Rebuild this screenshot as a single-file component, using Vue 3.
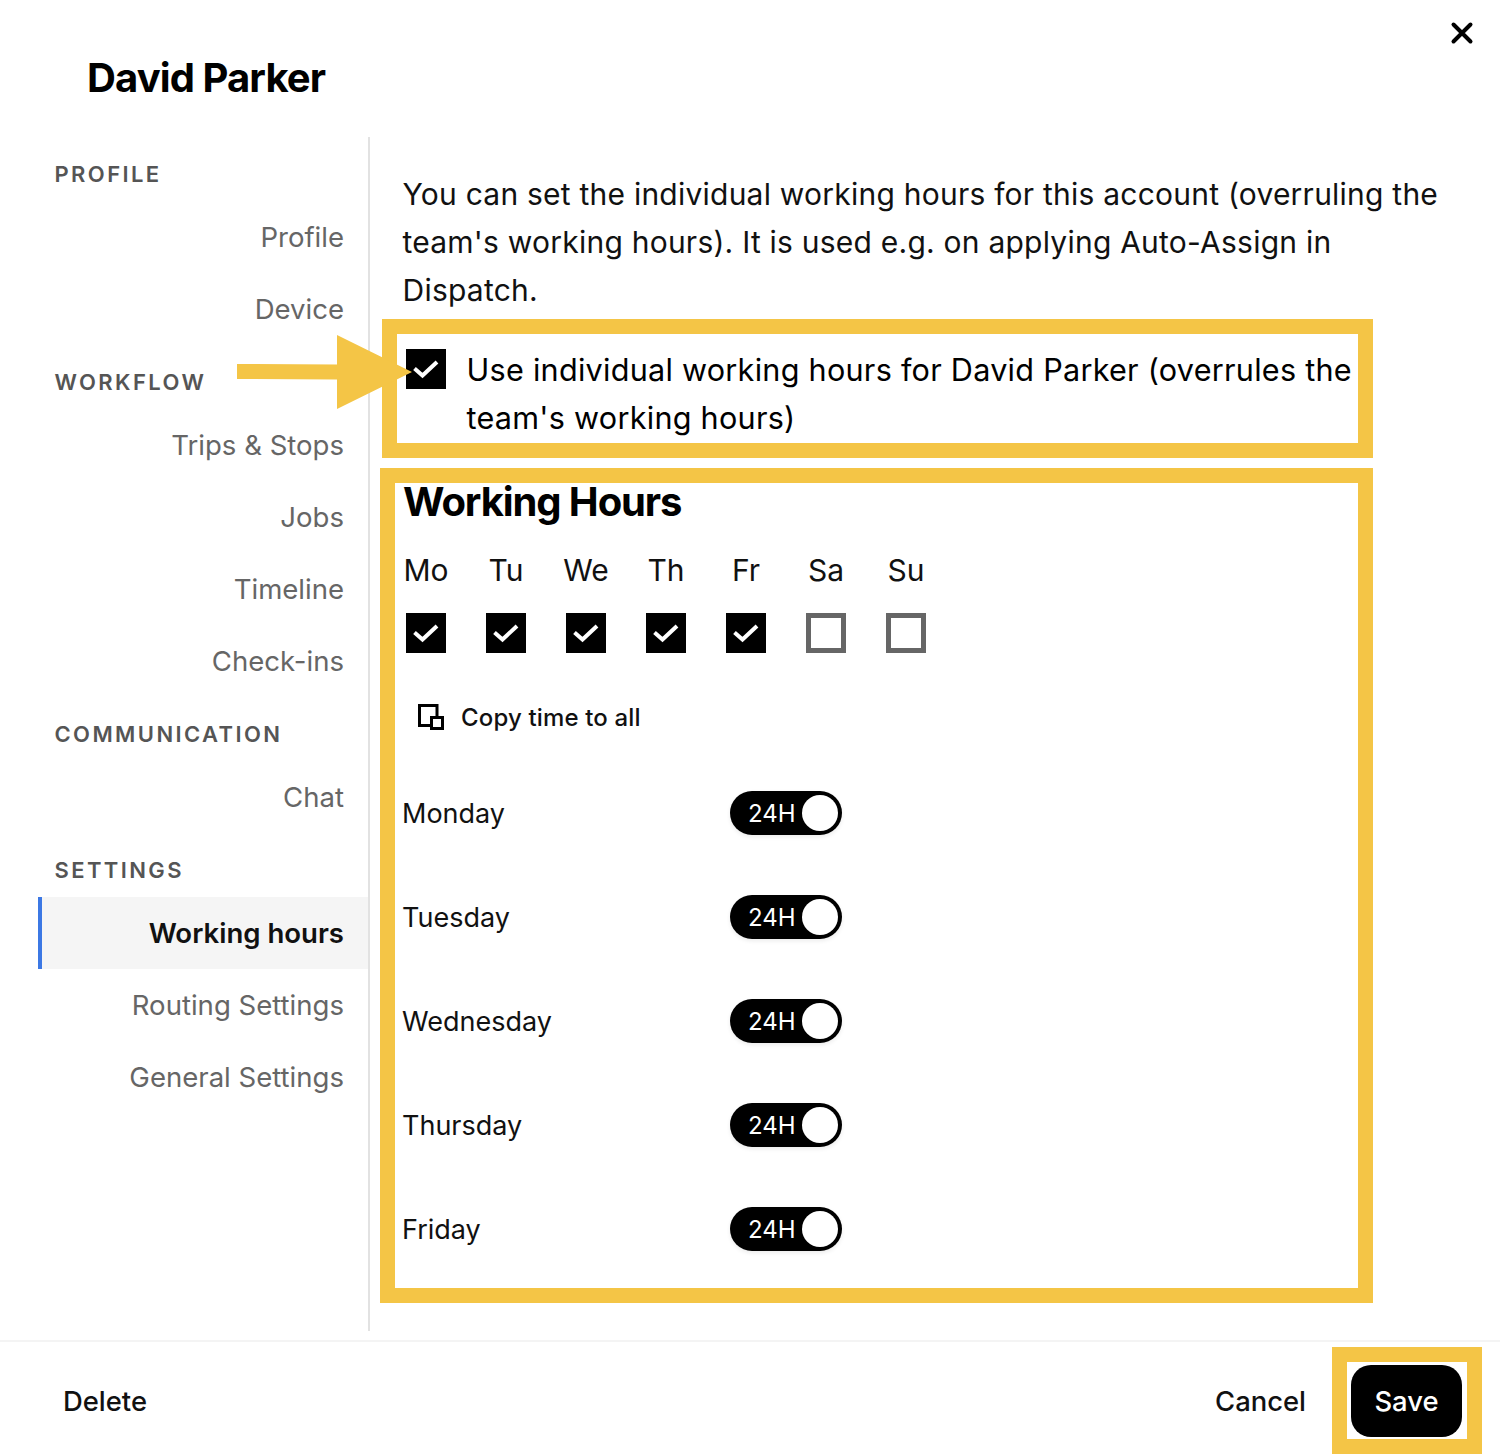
<script setup>
const nav = [
  { title: "PROFILE", items: ["Profile", "Device"] },
  { title: "WORKFLOW", items: ["Trips & Stops", "Jobs", "Timeline", "Check-ins"] },
  { title: "COMMUNICATION", items: ["Chat"] },
  { title: "SETTINGS", items: ["Working hours", "Routing Settings", "General Settings"] },
];
const days = [
  { label: "Mo", on: true },
  { label: "Tu", on: true },
  { label: "We", on: true },
  { label: "Th", on: true },
  { label: "Fr", on: true },
  { label: "Sa", on: false },
  { label: "Su", on: false },
];
const rows = ["Monday", "Tuesday", "Wednesday", "Thursday", "Friday"];
</script>

<template>
  <div class="page">
    <header class="head">
      <h1>David Parker</h1>
      <svg class="close" width="24" height="24" viewBox="0 0 24 24">
        <path d="M3.5 3.5 20.500 20.500M20.500 3.500 3.500 20.500" stroke="#000" stroke-width="4" stroke-linecap="round" fill="none" />
      </svg>
    </header>

    <div class="body">
      <nav class="side">
        <section v-for="group in nav" :key="group.title">
          <div class="group-title">{{ group.title }}</div>
          <div
            v-for="item in group.items"
            :key="item"
            class="nav-item"
            :class="{ active: item === 'Working hours' }"
          >
            {{ item }}
          </div>
        </section>
      </nav>

      <main class="main">
        <p class="intro">
          You can set the individual working hours for this account (overruling the team's working hours). It is used e.g. on applying Auto-Assign in Dispatch.
        </p>

        <div class="use-row">
          <span class="check on">
            <svg width="26" height="26" viewBox="0 0 26 26"><path d="M1.500 12.500 9.500 19.500 24 6" stroke="#fff" stroke-width="4" fill="none" /></svg>
          </span>
          <div class="use-text">Use individual working hours for David Parker (overrules the team's working hours)</div>
        </div>

        <h2>Working Hours</h2>

        <div class="days">
          <div v-for="d in days" :key="d.label" class="day">
            <span class="day-label">{{ d.label }}</span>
            <span class="check" :class="{ on: d.on }">
              <svg v-if="d.on" width="26" height="26" viewBox="0 0 26 26"><path d="M1.500 12.500 9.500 19.500 24 6" stroke="#fff" stroke-width="4" fill="none" /></svg>
            </span>
          </div>
        </div>

        <div class="copy">
          <svg width="26" height="26" viewBox="0 0 26 26" fill="none" stroke="#000" stroke-width="3">
            <path d="M13 21.500H1.500V1.500H19V13" />
            <rect x="13.500" y="13.500" width="11" height="11" fill="#fff" />
          </svg>
          <span>Copy time to all</span>
        </div>

        <div v-for="r in rows" :key="r" class="hours-row">
          <span class="hours-day">{{ r }}</span>
          <span class="toggle">
            <span class="toggle-text">24H</span>
            <span class="knob"></span>
          </span>
        </div>
      </main>
    </div>

    <footer class="foot">
      <span class="delete">Delete</span>
      <span class="cancel">Cancel</span>
      <button class="save">Save</button>
    </footer>

    <div class="mark mark-use"></div>
    <div class="mark mark-hours"></div>
    <div class="mark mark-save"></div>
    <svg class="arrow" width="176" height="76" viewBox="0 0 176 76">
      <path d="M0 29 100 29.500 100 0 175 37 100 74 100 44.500 0 44Z" fill="#f4c546" />
    </svg>
  </div>
</template>

<style>
body {
  background: #fff;
}
</style>

<style scoped>
.page {
  position: relative;
  width: 1500px;
  height: 1454px;
  overflow: hidden;
  display: flex;
  flex-direction: column;
  font-family: Inter, "Liberation Sans", sans-serif;
  color: #111;
  background: #fff;
}
.head {
  height: 137px;
  flex: none;
  display: flex;
  justify-content: space-between;
  align-items: flex-start;
  padding: 0 26px 0 87px;
  box-sizing: border-box;
}
.head h1 {
  margin: 54px 0 0;
  font-size: 40px;
  line-height: 48px;
  font-weight: 700;
  letter-spacing: -0.9px;
  color: #000;
}
.close {
  margin-top: 21px;
}
.body {
  height: 1194px;
  flex: none;
  display: flex;
  align-items: stretch;
}
.side {
  width: 332px;
  margin-left: 38px;
  box-sizing: border-box;
  border-right: 2px solid #e2e2e2;
  flex: none;
}
.group-title {
  height: 56px;
  margin-top: 8px;
  line-height: 58px;
  padding-left: 16.5px;
  font-size: 22px;
  font-weight: 600;
  letter-spacing: 2.4px;
  color: #555;
}
.nav-item {
  height: 72px;
  line-height: 72px;
  padding-right: 24px;
  text-align: right;
  font-size: 27.55px;
  color: #666;
}
.nav-item.active {
  background: #f5f5f5;
  box-shadow: inset 4px 0 0 #3c78e4;
  color: #111;
  font-weight: 600;
}
.main {
  flex: 1;
  padding-left: 32px;
  min-width: 0;
}
.intro {
  margin: 33px 0 0 0.5px;
  width: 1045px;
  font-size: 30px;
  line-height: 48px;
  letter-spacing: 0.23px;
}
.use-row {
  display: flex;
  margin-top: 32px;
  padding-left: 4px;
  width: 960px;
}
.check {
  width: 40px;
  height: 40px;
  box-sizing: border-box;
  border: 5px solid #666;
  display: flex;
  align-items: center;
  justify-content: center;
  flex: none;
}
.check.on {
  background: #000;
  border: 0;
}
.use-row .check {
  margin-top: 3px;
}
.use-text {
  margin-left: 20.5px;
  font-size: 30.6px;
  line-height: 48px;
  letter-spacing: 0.26px;
  color: #000;
}
h2 {
  margin: 36px 0 0 1px;
  font-size: 40px;
  line-height: 48px;
  font-weight: 700;
  letter-spacing: -1.1px;
  color: #000;
}
.days {
  display: flex;
  gap: 40px;
  margin: 24px 0 0 4px;
}
.day {
  width: 40px;
  display: flex;
  flex-direction: column;
  align-items: center;
  gap: 23px;
  flex: none;
}
.day-label {
  font-size: 30px;
  line-height: 40px;
  width: 40px;
  white-space: nowrap;
  display: flex;
  justify-content: center;
}
.copy {
  display: flex;
  align-items: center;
  gap: 17px;
  margin: 49px 0 0 16px;
  height: 30px;
  font-size: 24px;
  font-weight: 500;
  letter-spacing: 0.15px;
}
.hours-row {
  height: 104px;
  display: flex;
  align-items: center;
  font-size: 27px;
}
.copy + .hours-row {
  margin-top: 29px;
}
.hours-day {
  width: 328px;
}
.toggle {
  width: 112px;
  height: 44px;
  border-radius: 22px;
  background: #000;
  display: flex;
  align-items: center;
  justify-content: space-between;
  box-sizing: border-box;
  padding: 0 4px 0 18px;
  box-shadow: 0 2px 4px rgba(0, 0, 0, 0.08);
}
.toggle-text {
  color: #fff;
  font-size: 24px;
}
.knob {
  width: 36px;
  height: 36px;
  border-radius: 50%;
  background: #fff;
}
.foot {
  margin-top: 9px;
  flex: 1;
  border-top: 2px solid #f4f4f4;
  display: flex;
  align-items: flex-start;
  padding: 23px 38px 0 63px;
  font-size: 27.4px;
  font-weight: 500;
  color: #111;
}
.delete {
  line-height: 72px;
  margin-right: auto;
}
.cancel {
  line-height: 72px;
  margin-right: 45px;
}
.save {
  width: 111px;
  height: 72px;
  border: 0;
  border-radius: 20px;
  background: #000;
  color: #fff;
  font: inherit;
  padding: 0;
}
.mark {
  position: absolute;
  box-sizing: border-box;
  border: 15px solid #f4c546;
}
.mark-use {
  left: 382px;
  top: 319px;
  width: 991px;
  height: 139px;
}
.mark-hours {
  left: 380px;
  top: 468px;
  width: 993px;
  height: 835px;
}
.mark-save {
  left: 1332px;
  top: 1347px;
  width: 150px;
  height: 107px;
}
.arrow {
  position: absolute;
  left: 237px;
  top: 335px;
}
</style>
